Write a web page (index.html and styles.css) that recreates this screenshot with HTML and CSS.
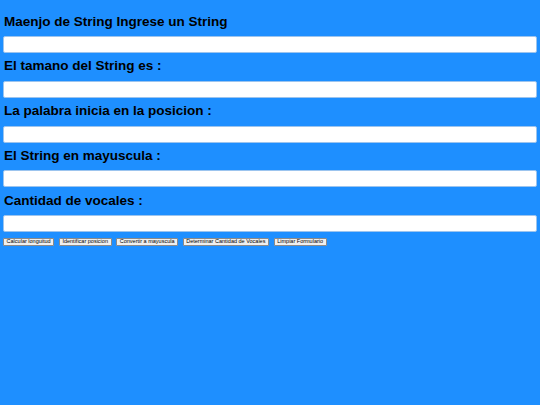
FILE: index.html
```html
<!DOCTYPE html>
<html lang="es">
<head>
<meta charset="utf-8">
<title>Manejo de String</title>
<link rel="stylesheet" href="styles.css">
</head>
<body>
<form class="form">
  <h3 class="label">Maenjo de String Ingrese un String</h3>
  <input class="field" type="text">
  <h3 class="label">El tamano del String es :</h3>
  <input class="field" type="text">
  <h3 class="label">La palabra inicia en la posicion :</h3>
  <input class="field" type="text">
  <h3 class="label">El String en mayuscula :</h3>
  <input class="field" type="text">
  <h3 class="label">Cantidad de vocales :</h3>
  <input class="field" type="text">
  <div class="actions">
    <button type="button" class="btn">Calcular longuitud</button>
    <button type="button" class="btn">Identificar posicion</button>
    <button type="button" class="btn">Convertir a mayuscula</button>
    <button type="button" class="btn">Determinar Cantidad de Vocales</button>
    <button type="button" class="btn">Limpiar Formulario</button>
  </div>
</form>
</body>
</html>
```
FILE: styles.css
```css
html, body {
  margin: 0;
  padding: 0;
  background: #1e8fff;
  height: 100%;
}
body {
  font-family: "Liberation Sans", Arial, sans-serif;
  padding: 0 3px;
}
.form {
  display: flex;
  flex-direction: column;
  padding-top: 13.5px;
}
.label {
  margin: 0 0 6.5px 1px;
  font-size: 13.5px;
  line-height: 16px;
  font-weight: bold;
  color: #000;
}
.field {
  box-sizing: border-box;
  width: 100%;
  height: 17px;
  margin: 0 0 5.25px 0;
  border: 1px solid #9cc4ee;
  border-radius: 2px;
  background: #fff;
  padding: 0 2px;
}
.actions {
  display: flex;
  gap: 4.6px;
  margin-top: 0.75px;
}
.btn {
  font-family: "Liberation Sans", Arial, sans-serif;
  font-size: 5.5px;
  line-height: 5.5px;
  height: 7.5px;
  padding: 0 2.6px;
  border: 1px solid #8a8a8a;
  border-radius: 1px;
  background: #efefef;
  color: #000;
  box-sizing: border-box;
  white-space: nowrap;
}
```
